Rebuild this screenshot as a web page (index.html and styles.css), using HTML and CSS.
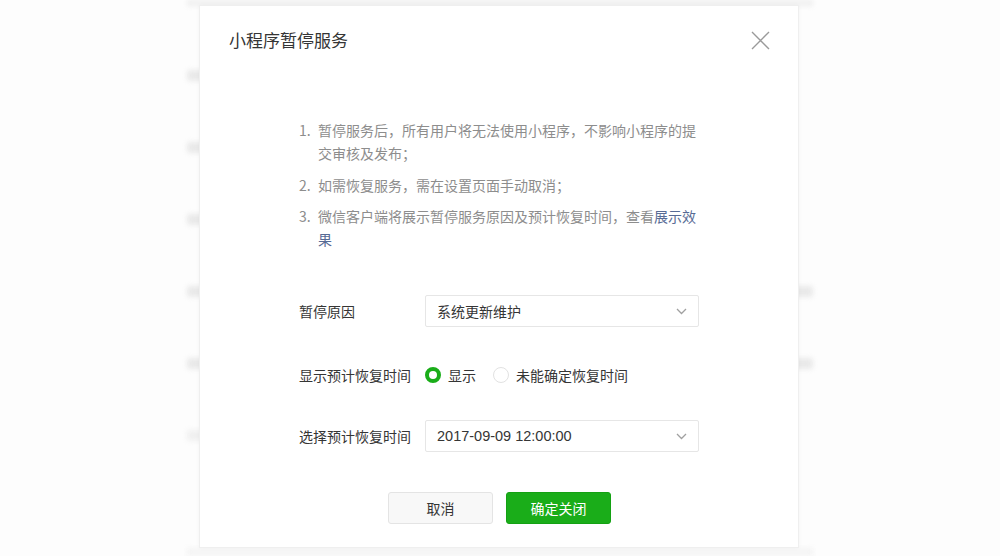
FILE: index.html
```html
<!DOCTYPE html>
<html lang="zh-CN">
<head>
<meta charset="utf-8">
<title>小程序暂停服务</title>
<link rel="stylesheet" href="styles.css">
</head>
<body>
<div class="page">
  <div class="page-top"></div>
  <div class="page-rows">
    <div class="page-row"><span class="bar"></span></div>
    <div class="page-row"><span class="bar"></span></div>
    <div class="page-row"><span class="bar"></span></div>
    <div class="page-row"><span class="bar bar-wide"></span></div>
    <div class="page-row"><span class="bar bar-wide"></span></div>
    <div class="page-row"><span class="bar bar-faint"></span></div>
  </div>
  <div class="page-bottom"></div>
</div>

<div class="dialog">
  <div class="dialog-head">
    <h3 class="dialog-title">小程序暂停服务</h3>
    <button class="dialog-close" aria-label="关闭">
      <svg width="19" height="19" viewBox="0 0 19 19"><path d="M1 1L18 18M18 1L1 18" stroke="#9a9a9a" stroke-width="1.4" fill="none"/></svg>
    </button>
  </div>
  <div class="dialog-body">
    <ol class="tips">
      <li><span class="num">1.</span><span class="txt">暂停服务后，所有用户将无法使用小程序，不影响小程序的提交审核及发布；</span></li>
      <li><span class="num">2.</span><span class="txt">如需恢复服务，需在设置页面手动取消；</span></li>
      <li><span class="num">3.</span><span class="txt">微信客户端将展示暂停服务原因及预计恢复时间，查看<a class="link" href="#">展示效果</a></span></li>
    </ol>
    <div class="form">
      <div class="form-row row-reason">
        <label class="form-label">暂停原因</label>
        <div class="select">
          <span class="select-text">系统更新维护</span>
          <svg class="chev" width="11" height="7" viewBox="0 0 11 7"><path d="M1 1L5.5 5.5L10 1" stroke="#a0a0a0" stroke-width="1.3" fill="none"/></svg>
        </div>
      </div>
      <div class="form-row row-show">
        <label class="form-label">显示预计恢复时间</label>
        <div class="radios">
          <span class="radio checked"></span><span class="radio-text">显示</span>
          <span class="radio"></span><span class="radio-text">未能确定恢复时间</span>
        </div>
      </div>
      <div class="form-row">
        <label class="form-label">选择预计恢复时间</label>
        <div class="select">
          <span class="select-text num-text">2017-09-09 12:00:00</span>
          <svg class="chev" width="11" height="7" viewBox="0 0 11 7"><path d="M1 1L5.5 5.5L10 1" stroke="#a0a0a0" stroke-width="1.3" fill="none"/></svg>
        </div>
      </div>
    </div>
    <div class="actions">
      <button class="btn btn-default">取消</button>
      <button class="btn btn-primary">确定关闭</button>
    </div>
  </div>
</div>
</body>
</html>
```

FILE: styles.css
```css
* { box-sizing: border-box; }
html, body { margin: 0; padding: 0; }
body {
  width: 1000px;
  height: 556px;
  overflow: hidden;
  background: #fdfdfd;
  font-family: "Noto Sans CJK SC", "Noto Sans", sans-serif;
  color: #353535;
  position: relative;
}

/* underlying blurred page */
.page {
  width: 626px;
  margin-left: 187px;
  height: 556px;
  display: flex;
  flex-direction: column;
  filter: blur(2.5px);
}
.page-top { height: 6px; background: #efefef; }
.page-rows { padding-top: 64px; display: flex; flex-direction: column; }
.page-row { height: 72px; display: flex; }
.bar { display: block; height: 11px; width: 600px; background: #e9e9e9; border-radius: 3px; }
.bar-wide { width: 626px; }
.bar-faint { background: #f0f0f0; }
.page-bottom { margin-top: auto; height: 8px; background: #f4f4f4; }

/* dialog */
.dialog {
  position: absolute;
  left: 199px;
  top: 5px;
  width: 600px;
  height: 543px;
  background: #ffffff;
  border: 1px solid #efefef;
  box-shadow: 0 0 4px rgba(0,0,0,0.04);
  padding-top: 22px;
}
.dialog-head {
  display: flex;
  align-items: center;
  justify-content: space-between;
  padding: 0 28px 0 29px;
  height: 24px;
}
.dialog-title {
  margin: 0;
  font-size: 17px;
  font-weight: normal;
  color: #353535;
  line-height: 24px;
}
.dialog-close {
  border: 0;
  background: none;
  padding: 0;
  width: 19px;
  height: 19px;
  display: flex;
  cursor: pointer;
}

.dialog-body { padding: 67px 99px 0 99px; }

.tips {
  list-style: none;
  margin: 0;
  padding: 0;
  font-size: 14px;
  line-height: 23px;
  color: #8d8d8d;
}
.tips li { display: flex; margin-bottom: 8.5px; }
.tips li:last-child { margin-bottom: 0; }
.num { width: 19px; flex: none; }
.txt { width: 381px; }
.link { color: #576b95; text-decoration: none; }

.form { margin-top: 44px; font-size: 14px; }
.form-row { display: flex; align-items: center; height: 32px; }
.row-reason { margin-bottom: 32px; }
.row-show { margin-bottom: 29px; }
.form-label { width: 126px; flex: none; color: #353535; }
.select {
  width: 274px;
  height: 32px;
  border: 1px solid #e6e6e6;
  border-radius: 2px;
  background: #fff;
  display: flex;
  align-items: center;
  justify-content: space-between;
  padding: 0 11px 0 11px;
  color: #353535;
}
.num-text { font-family: "Liberation Sans", "Noto Sans CJK SC", sans-serif; font-size: 14.5px; }
.radios { display: flex; align-items: center; }
.radio {
  width: 16px;
  height: 16px;
  border-radius: 50%;
  border: 1px solid #e2e2e2;
  background: #fff;
  flex: none;
}
.radio.checked { border: 4px solid #1aad19; }
.radio-text { margin-left: 7px; margin-right: 17px; color: #353535; }

.actions {
  display: flex;
  justify-content: center;
  gap: 13px;
  margin-top: 40px;
  margin-right: -1px;
}
.btn {
  width: 105px;
  height: 32px;
  border-radius: 3px;
  font-family: inherit;
  font-size: 14px;
  cursor: pointer;
  padding: 0;
}
.btn-default { background: #f8f8f8; border: 1px solid #e4e4e4; color: #353535; }
.btn-primary { background: #1aad19; border: 1px solid #14a113; color: #ffffff; }
```
